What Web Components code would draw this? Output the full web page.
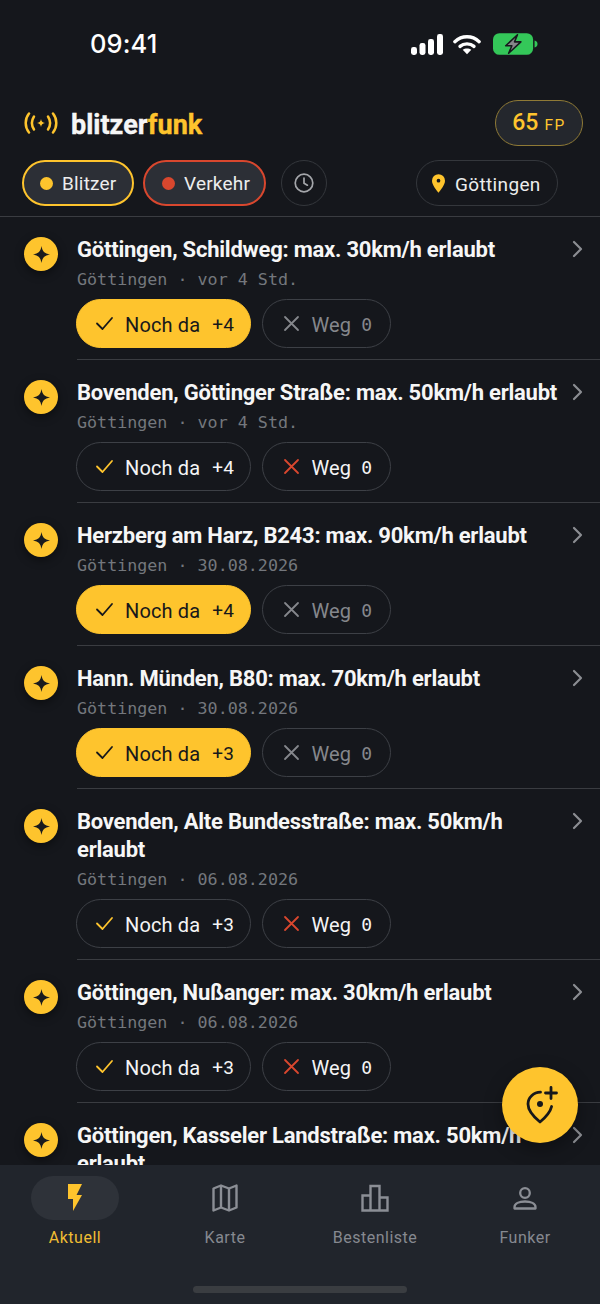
<!DOCTYPE html>
<html lang="de">
<head>
<meta charset="utf-8">
<title>blitzerfunk</title>
<style>
  html, body { margin: 0; height: 100%; background: #15171c; }
  body { font-family: Roboto, sans-serif; color: #f4f4f5; }
</style>
</head>
<body>
<app-screen>
  <status-bar slot="status"></status-bar>
  <app-header slot="header"></app-header>
  <report-item slot="list" meta="Göttingen · vor 4 Std." confirmed count="+4">Göttingen, Schildweg: max. 30km/h erlaubt</report-item>
  <report-item slot="list" meta="Göttingen · vor 4 Std." count="+4">Bovenden, Göttinger Straße: max. 50km/h erlaubt</report-item>
  <report-item slot="list" meta="Göttingen · 30.08.2026" confirmed count="+4">Herzberg am Harz, B243: max. 90km/h erlaubt</report-item>
  <report-item slot="list" meta="Göttingen · 30.08.2026" confirmed count="+3">Hann. Münden, B80: max. 70km/h erlaubt</report-item>
  <report-item slot="list" meta="Göttingen · 06.08.2026" count="+3">Bovenden, Alte Bundesstraße: max. 50km/h erlaubt</report-item>
  <report-item slot="list" meta="Göttingen · 06.08.2026" count="+3">Göttingen, Nußanger: max. 30km/h erlaubt</report-item>
  <report-item slot="list">Göttingen, Kasseler Landstraße: max. 50km/h erlaubt</report-item>
  <add-fab slot="fab"></add-fab>
  <tab-bar slot="tabs"></tab-bar>
</app-screen>

<script>
const BODY_FONT = `Roboto, sans-serif`;

class AppScreen extends HTMLElement {
  constructor() {
    super();
    this.attachShadow({ mode: 'open' });
  }

  connectedCallback() {
    this.shadowRoot.innerHTML = `
      <style>
        :host {
          display: flex;
          flex-direction: column;
          position: relative;
          width: 600px;
          height: 1304px;
          overflow: hidden;
          background: #15171c;
        }
        #list {
          flex: 1;
          min-height: 0;
          overflow: hidden;
        }
      </style>
      <slot name="status"></slot>
      <slot name="header"></slot>
      <div id="list"><slot name="list"></slot></div>
      <slot name="fab"></slot>
      <slot name="tabs"></slot>
    `;
  }
}

class StatusBar extends HTMLElement {
  constructor() {
    super();
    this.attachShadow({ mode: 'open' });
  }

  connectedCallback() {
    this.shadowRoot.innerHTML = `
      <style>
        :host {
          display: flex;
          align-items: center;
          justify-content: space-between;
          height: 88px;
          padding: 0 62px 0 90px;
          box-sizing: border-box;
        }
        #time {
          font: 500 25.500px/1 Inter, Roboto, sans-serif;
          color: #fff;
          letter-spacing: 0.1px;
        }
        #icons { display: flex; align-items: center; gap: 10px; }
        svg { display: block; }
      </style>
      <div id="time">09:41</div>
      <div id="icons">
        <svg width="32" height="21" viewBox="0 0 32 21">
          <rect x="0" y="13" width="6" height="8" rx="2.4" fill="#fff"/>
          <rect x="8.5" y="9" width="6" height="12" rx="2.4" fill="#fff"/>
          <rect x="17" y="5" width="6" height="16" rx="2.4" fill="#fff"/>
          <rect x="26" y="0" width="6" height="21" rx="2.4" fill="#fff"/>
        </svg>
        <svg width="28" height="21" viewBox="0 0 30 21">
          <path d="M2 7.5C9.5 .5 20.5 .5 28 7.5" fill="none" stroke="#fff" stroke-width="3.6" stroke-linecap="round"/>
          <path d="M7.5 12.5C11.6 9 18.4 9 22.5 12.5" fill="none" stroke="#fff" stroke-width="3.6" stroke-linecap="round"/>
          <path d="M15 21l-4.6-4.8c2.6-2 6.6-2 9.2 0z" fill="#fff"/>
        </svg>
        <svg width="45" height="22" viewBox="0 0 46 22" style="margin-left:2px">
          <rect x="0" y="0" width="41" height="22" rx="6.5" fill="#34c759"/>
          <path d="M42.5 7.5c2 .4 3 1.800 3 3.500s-1 3.100-3 3.500z" fill="#34c759"/>
          <path d="M25 1.500L13 12.800h6.300L16 20.500 28.500 8.800H22z" fill="#86868a" stroke="#16181c" stroke-width="1.600" stroke-linejoin="round"/>
        </svg>
      </div>
    `;
  }
}

class AppHeader extends HTMLElement {
  constructor() {
    super();
    this.attachShadow({ mode: 'open' });
  }

  connectedCallback() {
    this.shadowRoot.innerHTML = `
      <style>
        :host {
          display: block;
          height: 129px;
          box-sizing: border-box;
          border-bottom: 1px solid #3a3c41;
          font-family: ${BODY_FONT};
        }
        #top {
          display: flex;
          align-items: center;
          justify-content: space-between;
          height: 46px;
          margin-top: 12px;
          padding: 0 17px 0 24px;
        }
        #brand { display: flex; align-items: center; gap: 13px; }
        #word {
          padding-top: 4px;
          font: 700 27px/1 ${BODY_FONT};
          -webkit-text-stroke: 0.4px currentColor;
          color: #f6f6f6;
        }
        #word b { color: #fec42d; font-weight: 700; }
        #points {
          display: flex;
          align-items: baseline;
          justify-content: center;
          gap: 6px;
          box-sizing: border-box;
          width: 88px;
          height: 46px;
          line-height: 44px;
          border: 1.500px solid #8f7a36;
          border-radius: 23px;
          background: #24272d;
          color: #fec42d;
        }
        #points .n { font-size: 23px; font-weight: 500; }
        #points .u { font-size: 15.500px; letter-spacing: 1.500px; }
        #filters {
          display: flex;
          align-items: center;
          gap: 9px;
          margin-top: 14px;
          padding: 0 42px 0 22px;
        }
        #spacer { flex: 1; }
        svg { display: block; }
      </style>
      <div id="top">
        <div id="brand">
          <svg width="34" height="22" viewBox="0 0 34 22" fill="none" stroke="#fec42d" stroke-width="2.500" stroke-linecap="round">
            <path d="M5 1.500C.6 7 .6 15 5 20.500"/>
            <path d="M10 4.500C7.400 8.500 7.400 13.500 10 17.500"/>
            <path d="M29 1.500C33.400 7 33.400 15 29 20.500"/>
            <path d="M24 4.500C26.600 8.500 26.600 13.500 24 17.500"/>
            <path d="M17 7c.6 2.700 1.300 3.400 4 4-2.700.6-3.400 1.300-4 4-.6-2.700-1.300-3.400-4-4 2.700-.6 3.400-1.300 4-4z" fill="#fec42d" stroke="none"/>
          </svg>
          <div id="word">blitzer<b>funk</b></div>
        </div>
        <div id="points"><span class="n">65</span><span class="u">FP</span></div>
      </div>
      <div id="filters">
        <filter-chip tone="yellow">Blitzer</filter-chip>
        <filter-chip tone="red">Verkehr</filter-chip>
        <clock-chip></clock-chip>
        <div id="spacer"></div>
        <filter-chip tone="place">Göttingen</filter-chip>
      </div>
    `;
  }
}

class FilterChip extends HTMLElement {
  constructor() {
    super();
    this.attachShadow({ mode: 'open' });
  }

  connectedCallback() {
    const tone = this.getAttribute('tone');
    const lead = tone === 'place'
      ? `<svg width="13" height="19" viewBox="0 0 14 20"><path fill-rule="evenodd" d="M7 0a7 7 0 0 1 7 7c0 4.600-5 10.500-7 13C5 17.500 0 11.600 0 7a7 7 0 0 1 7-7zm0 5a2 2 0 1 0 0 4 2 2 0 0 0 0-4z" fill="#fec42d"/></svg>`
      : `<span id="dot"></span>`;
    this.shadowRoot.innerHTML = `
      <style>
        :host {
          display: inline-flex;
          align-items: center;
          gap: 9px;
          box-sizing: border-box;
          height: 46px;
          border-radius: 23px;
          font: 400 19px/1 ${BODY_FONT};
          letter-spacing: 0.2px;
          color: #eceded;
        }
        :host([tone="yellow"]) { width: 112px; padding-left: 16px; background: #2c2f36; border: 2px solid #fec42d; }
        :host([tone="red"]) { width: 123px; padding-left: 17px; background: #2c2f36; border: 2px solid #d9472e; }
        :host([tone="place"]) { width: 142px; padding: 2px 0 0 15px; gap: 10px; letter-spacing: 0.35px; border: 1.500px solid #34373c; }
        #dot { width: 13px; height: 13px; border-radius: 50%; background: #fec42d; }
        :host([tone="red"]) #dot { background: #d9472e; }
        svg { display: block; margin-top: -2px; }
      </style>
      ${lead}<slot></slot>
    `;
  }
}

class ClockChip extends HTMLElement {
  constructor() {
    super();
    this.attachShadow({ mode: 'open' });
  }

  connectedCallback() {
    this.shadowRoot.innerHTML = `
      <style>
        :host {
          display: flex;
          align-items: center;
          justify-content: center;
          box-sizing: border-box;
          width: 46px;
          height: 46px;
          margin-left: 6px;
          border-radius: 50%;
          border: 1.500px solid #34373c;
        }
      </style>
      <svg width="22" height="22" viewBox="0 0 22 22" fill="none" stroke="#a4a6aa" stroke-width="1.700" stroke-linecap="round" stroke-linejoin="round">
        <circle cx="11" cy="11" r="8.800"/>
        <path d="M11 6v5.200l3.400 2"/>
      </svg>
    `;
  }
}

class ReportItem extends HTMLElement {
  constructor() {
    super();
    this.attachShadow({ mode: 'open' });
  }

  connectedCallback() {
    const on = this.hasAttribute('confirmed');
    // the last row is cut by the tab bar, it only shows its title
    const rest = this.hasAttribute('meta') ? `
        <div id="meta">${this.getAttribute('meta')}</div>
        <div id="votes">
          <vote-button kind="yes" count="${this.getAttribute('count')}" ${on ? 'active' : ''}>Noch da</vote-button>
          <vote-button kind="no" count="0" ${on ? 'dim' : ''}>Weg</vote-button>
        </div>` : '';
    this.shadowRoot.innerHTML = `
      <style>
        :host {
          display: grid;
          grid-template-columns: 34px 1fr;
          column-gap: 19px;
          padding-left: 24px;
          font-family: ${BODY_FONT};
        }
        #badge {
          width: 34px;
          height: 34px;
          margin-top: 20px;
          border-radius: 50%;
          background: #fec42d;
          display: flex;
          align-items: center;
          justify-content: center;
          box-shadow: 0 3px 10px rgba(0, 0, 0, 0.45);
        }
        #main {
          position: relative;
          padding: 19px 0 11px;
          border-bottom: 1px solid #3a3c41;
        }
        #title {
          width: 490px;
          font: 700 22px/28px ${BODY_FONT};
          letter-spacing: -0.23px;
          color: #f6f6f6;
        }
        #chev {
          position: absolute;
          top: 23px;
          right: 17px;
        }
        #meta {
          margin-top: 4px;
          font: 400 16.700px/22px "DejaVu Sans Mono", monospace;
          color: #74777d;
        }
        #votes {
          display: flex;
          gap: 11px;
          margin: 9px 0 0 -1px;
        }
        svg { display: block; }
      </style>
      <div id="badge">
        <svg width="17" height="17" viewBox="0 0 20 20"><path d="M10 0c1 6.200 3.500 9 10 10-6.500 1-9 3.800-10 10-1-6.200-3.500-9-10-10C6.500 9 9 6.200 10 0z" fill="#1a1b1e"/></svg>
      </div>
      <div id="main">
        <div id="title"><slot></slot></div>
        <svg id="chev" width="12" height="18" viewBox="0 0 12 18" fill="none" stroke="#8b8d92" stroke-width="2.200" stroke-linecap="round" stroke-linejoin="round"><path d="M3 2l7 7-7 7"/></svg>
        ${rest}
      </div>
    `;
  }
}

class VoteButton extends HTMLElement {
  constructor() {
    super();
    this.attachShadow({ mode: 'open' });
  }

  connectedCallback() {
    const yes = this.getAttribute('kind') === 'yes';
    const path = yes ? 'M2 9.500l5.500 5.500L17 4' : 'M3 3l13 13M16 3L3 16';
    this.shadowRoot.innerHTML = `
      <style>
        :host {
          display: flex;
          align-items: center;
          box-sizing: border-box;
          height: 49px;
          padding-top: 2px;
          border-radius: 25px;
          border: 1.500px solid #3d4046;
          font: 400 20px/1 ${BODY_FONT};
          letter-spacing: 0.15px;
          color: #f4f4f5;
          --mark: #fec42d;
        }
        :host([kind="yes"]) { width: 175px; padding-left: 18px; }
        :host([kind="no"]) { width: 129px; padding-left: 18.500px; --mark: #d9472e; }
        :host([active]) { background: #fec42d; border-color: #fec42d; color: #17181b; --mark: #17181b; }
        :host([dim]) { color: #85878c; --mark: #85878c; }
        svg { flex: none; margin: -2px 11px 0 0; }
        #count { margin-left: auto; font-size: 19px; }
        :host([kind="yes"]) #count { margin-right: 16px; }
        :host([kind="no"]) #count { margin-left: 10px; font: 400 18px/1 "DejaVu Sans Mono", monospace; letter-spacing: 0; }
      </style>
      <svg width="19" height="19" viewBox="0 0 19 19" fill="none" stroke="var(--mark)" stroke-width="1.800" stroke-linecap="round" stroke-linejoin="round"><path d="${path}"/></svg>
      <slot></slot><span id="count">${this.getAttribute('count')}</span>
    `;
  }
}

class AddFab extends HTMLElement {
  constructor() {
    super();
    this.attachShadow({ mode: 'open' });
  }

  connectedCallback() {
    this.shadowRoot.innerHTML = `
      <style>
        :host {
          position: absolute;
          left: 502px;
          top: 1067px;
          width: 76px;
          height: 76px;
          border-radius: 50%;
          background: #fec42d;
          display: flex;
          align-items: center;
          justify-content: center;
          box-shadow: 0 6px 18px rgba(0, 0, 0, 0.35);
        }
      </style>
      <svg width="36" height="38" viewBox="0 0 36 38" fill="none" stroke="#17181b" stroke-width="2.800" stroke-linecap="round" stroke-linejoin="round">
        <path d="M18.500 6.200C11.500 6.200 6 11.500 6 18c0 6.500 6.500 13.500 12 18 4.800-4 10.200-9.500 11.600-15.500"/>
        <path d="M29 1.500v11M23.500 7h11"/>
        <circle cx="18" cy="18" r="3" fill="#17181b" stroke="none"/>
      </svg>
    `;
  }
}

class TabBar extends HTMLElement {
  constructor() {
    super();
    this.attachShadow({ mode: 'open' });
  }

  connectedCallback() {
    this.shadowRoot.innerHTML = `
      <style>
        :host {
          display: block;
          position: relative;
          flex: none;
          height: 139px;
          background: #21252c;
        }
        #tabs { display: grid; grid-template-columns: repeat(4, 1fr); padding-top: 11px; }
        #home {
          position: absolute;
          left: 193px;
          bottom: 11px;
          width: 214px;
          height: 7px;
          border-radius: 4px;
          background: #3a3d41;
        }
      </style>
      <div id="tabs">
        <tab-item active label="Aktuell">
          <svg width="24" height="30" viewBox="0 0 24 30"><path d="M5 1h14l-5.500 11H19L10 28V16H5z" fill="#fec42d"/></svg>
        </tab-item>
        <tab-item label="Karte">
          <svg width="26" height="28" viewBox="0 0 26 28" fill="none" stroke="#8b8e95" stroke-width="2.400" stroke-linejoin="round"><path d="M1.500 4.500l7.500-3 8 3 7.500-3v22l-7.500 3-8-3-7.500 3z"/><path d="M9 1.500v22M17 4.500v22"/></svg>
        </tab-item>
        <tab-item label="Bestenliste">
          <svg width="28" height="28" viewBox="0 0 28 28" fill="none" stroke="#8b8e95" stroke-width="2.400"><path d="M1.500 26.500v-15h8v15zM9.500 26.500V2h9v24.500zM18.500 26.500v-13h8v13z"/></svg>
        </tab-item>
        <tab-item label="Funker">
          <svg width="26" height="26" viewBox="0 0 26 26" fill="none" stroke="#8b8e95" stroke-width="2.300"><circle cx="13" cy="8" r="4.800"/><path d="M2.500 23.500v-1.500c0-3.500 4.500-5.500 10.500-5.500s10.500 2 10.500 5.500v1.500z" stroke-linejoin="round"/></svg>
        </tab-item>
      </div>
      <div id="home"></div>
    `;
  }
}

class TabItem extends HTMLElement {
  constructor() {
    super();
    this.attachShadow({ mode: 'open' });
  }

  connectedCallback() {
    this.shadowRoot.innerHTML = `
      <style>
        :host {
          display: flex;
          flex-direction: column;
          align-items: center;
          font: 400 16px/1 ${BODY_FONT};
          letter-spacing: 0.5px;
          color: #868990;
        }
        :host([active]) { color: #f0bd33; }
        #pill {
          display: flex;
          align-items: center;
          justify-content: center;
          width: 88px;
          height: 44px;
          border-radius: 22px;
        }
        :host([active]) #pill { background: #2e3239; }
        #label { margin-top: 10px; }
      </style>
      <div id="pill"><slot></slot></div>
      <div id="label">${this.getAttribute('label')}</div>
    `;
  }
}

customElements.define('app-screen', AppScreen);
customElements.define('status-bar', StatusBar);
customElements.define('app-header', AppHeader);
customElements.define('filter-chip', FilterChip);
customElements.define('clock-chip', ClockChip);
customElements.define('report-item', ReportItem);
customElements.define('vote-button', VoteButton);
customElements.define('add-fab', AddFab);
customElements.define('tab-bar', TabBar);
customElements.define('tab-item', TabItem);
</script>
</body>
</html>
